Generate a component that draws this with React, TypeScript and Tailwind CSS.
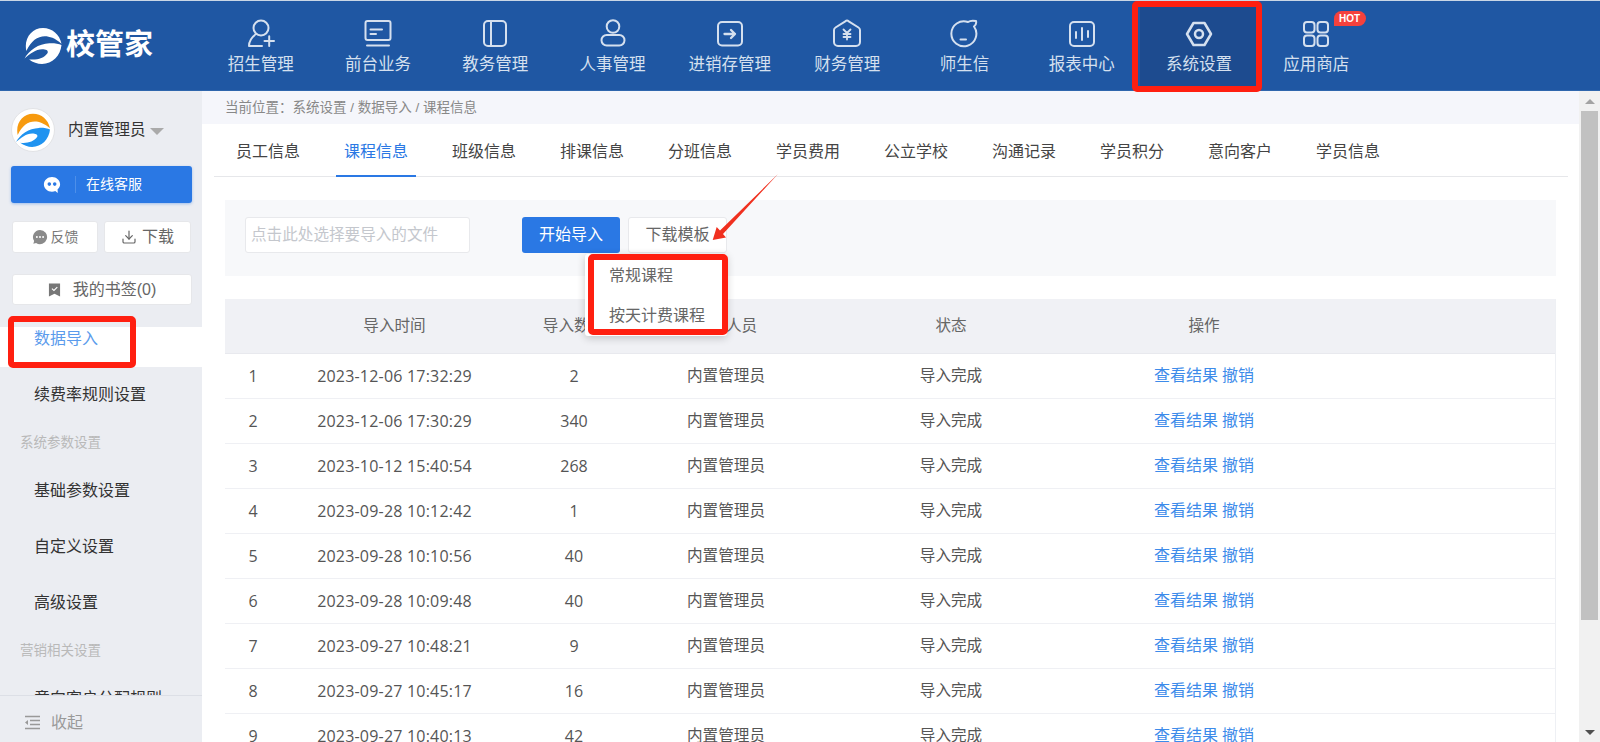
import type { ReactNode } from "react";
import { Download } from "lucide-react";

const FONT = "font-['Liberation_Sans','Noto_Sans_CJK_SC',sans-serif]";
const DIGITS = "font-['Open_Sans','Noto_Sans_CJK_SC',sans-serif] text-[16px]";

const NavIcon = ({ children, thick }: { children: ReactNode; thick?: boolean }) => (
  <svg width="30" height="30" viewBox="0 0 30 30" fill="none" stroke="currentColor" strokeWidth={thick ? 2.5 : 2} strokeLinecap="round" strokeLinejoin="round">
    {children}
  </svg>
);

const navItems: { label: string; icon: ReactNode; active?: boolean; hot?: boolean }[] = [
  {
    label: "招生管理",
    icon: (
      <NavIcon>
        <circle cx="15" cy="9" r="7.5" />
        <path d="M10 15 C6 18 3 22 3 27 H16" />
        <path d="M18.5 22 H28 M23.2 17.2 V27" />
      </NavIcon>
    ),
  },
  {
    label: "前台业务",
    icon: (
      <NavIcon>
        <rect x="2.5" y="2" width="25" height="19" rx="2" />
        <path d="M7.5 10.5 H19 M7.5 15 H13" />
        <path d="M4 26.5 H26" />
      </NavIcon>
    ),
  },
  {
    label: "教务管理",
    icon: (
      <NavIcon>
        <rect x="4" y="2" width="22" height="25" rx="4" />
        <path d="M11 2 V27" />
      </NavIcon>
    ),
  },
  {
    label: "人事管理",
    icon: (
      <NavIcon>
        <circle cx="15" cy="7.5" r="6.3" />
        <rect x="3.5" y="16" width="23" height="10.5" rx="5.2" />
      </NavIcon>
    ),
  },
  {
    label: "进销存管理",
    icon: (
      <NavIcon>
        <rect x="3" y="3" width="24" height="23.5" rx="4" />
        <path d="M9.5 15 H20 M16 11 L20 15 L16 19" strokeWidth="2.3" />
      </NavIcon>
    ),
  },
  {
    label: "财务管理",
    icon: (
      <NavIcon>
        <path d="M13.3 2.3 A2.5 2.5 0 0 1 16.7 2.3 L26.5 8.5 A3 3 0 0 1 28 11 V23 A4 4 0 0 1 24 27 H6 A4 4 0 0 1 2 23 V11 A3 3 0 0 1 3.5 8.5 Z" />
        <path d="M11.5 10.5 L15 14 L18.5 10.5 M11.5 15 H18.5 M11.5 18 H18.5 M15 14 V20.5" strokeWidth="1.8" />
      </NavIcon>
    ),
  },
  {
    label: "师生信",
    icon: (
      <NavIcon>
        <path d="M19 3 A12.5 12.5 0 1 0 25 7.5 C27 6 27.5 4 27 2 C24.5 1.5 21 1.5 19 3 Z" />
        <path d="M11.5 20.5 H17" />
      </NavIcon>
    ),
  },
  {
    label: "报表中心",
    icon: (
      <NavIcon>
        <rect x="3" y="3" width="24" height="24" rx="4" />
        <path d="M9 13 V19 M15 9 V21 M21 12 V18" />
      </NavIcon>
    ),
  },
  {
    label: "系统设置",
    active: true,
    icon: (
      <NavIcon thick>
        <path d="M9.5 4 H20.5 L27 15 L20.5 26 H9.5 L3 15 Z" />
        <circle cx="15" cy="15" r="4" />
      </NavIcon>
    ),
  },
  {
    label: "应用商店",
    hot: true,
    icon: (
      <NavIcon>
        <rect x="3" y="3" width="10.5" height="10.5" rx="3" />
        <rect x="16.5" y="3" width="10.5" height="10.5" rx="3" />
        <rect x="3" y="16.5" width="10.5" height="10.5" rx="3" />
        <rect x="16.5" y="16.5" width="10.5" height="10.5" rx="3" />
      </NavIcon>
    ),
  },
];

const tabs = ["员工信息", "课程信息", "班级信息", "排课信息", "分班信息", "学员费用", "公立学校", "沟通记录", "学员积分", "意向客户", "学员信息"];

const rows = [
  ["1", "2023-12-06 17:32:29", "2"],
  ["2", "2023-12-06 17:30:29", "340"],
  ["3", "2023-10-12 15:40:54", "268"],
  ["4", "2023-09-28 10:12:42", "1"],
  ["5", "2023-09-28 10:10:56", "40"],
  ["6", "2023-09-28 10:09:48", "40"],
  ["7", "2023-09-27 10:48:21", "9"],
  ["8", "2023-09-27 10:45:17", "16"],
  ["9", "2023-09-27 10:40:13", "42"],
];

const COLS = "grid grid-cols-[56px_227px_132px_172px_278px_228px_1fr] items-center text-center";

const Logo = ({ top, bottom }: { top: string; bottom: string }) => (
  <svg viewBox="0 0 40 40" className="w-full h-full">
    <path d="M2 26 C-1 12 8 1 20 1 C30 1 38 8 40 18 C33 12 27 10 22 10 C14 10 7 15 2 26 Z" fill={top} />
    <path d="M0 34 C5 25 15 18 27 17.5 C32 17.3 37 18 40 19.5 C39 31 30 40 19 40 C14 40 9 38 5 35 C13 36 21 34 25 28 C26 25 23 24 19 24 C12 24 6 29 0 34 Z" fill={bottom} />
  </svg>
);

const App = () => {
  return (
    <div className={`relative h-[742px] w-full overflow-hidden bg-white flex flex-col ${FONT}`}>
      {/* top bar */}
      <header className="h-[91px] shrink-0 bg-[#1f57a3] border-t border-t-[#c9d6e6] border-b border-b-[#2f66ad] flex">
        <div className="w-[202px] shrink-0 pl-6 flex items-center gap-[4px]">
          <div className="w-[38px] h-[37px]">
            <Logo top="#ffffff" bottom="#ffffff" />
          </div>
          <span className="text-[29px] font-bold text-white leading-none">校管家</span>
        </div>
        <nav className="flex">
          {navItems.map((item) => (
            <div
              key={item.label}
              className={`relative w-[117.3px] pt-[18px] flex flex-col items-center text-[#d5e0ef] ${item.active ? "bg-[#1d4b8f]" : ""}`}
            >
              <div className="h-[30px]">{item.icon}</div>
              <span className="mt-[3px] text-[16.5px] leading-6 whitespace-nowrap">{item.label}</span>
              {item.hot && (
                <span className="absolute left-[76px] top-[10px] h-[15px] w-[32px] rounded-full rounded-bl-none bg-[#f5413c] text-white text-[10px] font-bold leading-[15px] text-center">
                  HOT
                </span>
              )}
            </div>
          ))}
        </nav>
      </header>

      <div className="flex flex-1 min-h-0">
        {/* sidebar */}
        <aside className="w-[202px] shrink-0 bg-[#ebedf2] flex flex-col">
          <div className="pl-[11px] pr-[10px] pt-[17px]">
            <div className="flex items-center h-11">
              <div className="w-11 h-11 rounded-full bg-white border border-[#e2e3e6] p-1">
                <Logo top="#f79a0e" bottom="#1f93f0" />
              </div>
              <span className="ml-[13px] text-[15.5px] text-[#333]">内置管理员</span>
              <span className="ml-[4px] mt-[2px] w-0 h-0 border-x-[7px] border-x-transparent border-t-[7px] border-t-[#aaa]" />
            </div>
            <div className="mt-[14px] h-[37px] rounded-[3px] bg-[#2a78e4] shadow-[0_1px_3px_rgba(42,120,228,0.4)] flex items-center text-white text-[14px]">
              <svg viewBox="0 0 20 20" className="w-[18px] h-[18px] ml-[32px] mt-px" fill="#fff">
                <path d="M10 1 C5 1 1 4.6 1 9.5 C1 14 5 17.5 10 17.5 C11.5 17.5 12.6 17.2 13.6 16.8 L16.4 19 L16.2 14.8 C18 13.2 19 11.4 19 9.5 C19 4.6 15 1 10 1 Z" />
                <circle cx="7" cy="9" r="2" fill="#2a78e4" />
                <circle cx="13" cy="9" r="2" fill="#2a78e4" />
              </svg>
              <span className="ml-[14px] h-[17px] w-px bg-[#4d8fe9]" />
              <span className="ml-[10px]">在线客服</span>
            </div>
            <div className="mt-[18px] flex gap-[6px] pl-px">
              <div className="w-[86px] h-8 bg-white rounded-[3px] border border-[#e6e7ea] flex items-center justify-center gap-[3px] text-[14px] text-[#777]">
                <svg viewBox="0 0 18 18" className="w-4 h-4" fill="#8a8a8a">
                  <path d="M9 1 A8 8 0 1 1 4.6 15.7 L1.5 16.5 L2.4 13.4 A8 8 0 0 1 9 1 Z" />
                  <circle cx="5.5" cy="9" r="1.1" fill="#fff" />
                  <circle cx="9" cy="9" r="1.1" fill="#fff" />
                  <circle cx="12.5" cy="9" r="1.1" fill="#fff" />
                </svg>
                反馈
              </div>
              <div className="w-[87px] h-8 bg-white rounded-[3px] border border-[#e6e7ea] flex items-center justify-center gap-[5px] text-[16px] text-[#666]">
                <Download size={16} strokeWidth={1.8} />
                下载
              </div>
            </div>
            <div className="mt-[21px] ml-px w-[180px] h-[31px] bg-white rounded-[3px] border border-[#e6e7ea] flex items-center justify-center gap-[12px] text-[16px] text-[#666]">
              <svg viewBox="0 0 14 16" className="w-[13px] h-4">
                <path d="M1 1 H13 V15 L7 12 L1 15 Z" fill="#777" />
                <path d="M4.2 6.5 L6.4 8.5 L10 4.8" stroke="#fff" strokeWidth="1.2" fill="none" />
              </svg>
              我的书签(0)
            </div>
          </div>

          <div className="mt-[22px] flex-1 min-h-0 overflow-hidden">
            <div className="-mt-[16px] text-[16px] text-[#333]">
              <div className="h-14 bg-white flex items-center pl-[34px] text-[#5b9bec]">数据导入</div>
              <div className="h-14 flex items-center pl-[34px]">续费率规则设置</div>
              <div className="h-10 flex items-center pl-5 text-[13.5px] text-[#b9b9b9]">系统参数设置</div>
              <div className="h-14 flex items-center pl-[34px]">基础参数设置</div>
              <div className="h-14 flex items-center pl-[34px]">自定义设置</div>
              <div className="h-14 flex items-center pl-[34px]">高级设置</div>
              <div className="h-10 flex items-center pl-5 text-[13.5px] text-[#b9b9b9]">营销相关设置</div>
              <div className="h-14 flex items-center pl-[34px]">意向客户分配规则</div>
            </div>
          </div>
          <div className="h-[47px] shrink-0 border-t border-[#dcdfe6] flex items-center pl-[24px] pt-[7px] gap-[10px] text-[16px] text-[#999]">
            <svg width="17" height="15" viewBox="0 0 17 15" fill="none" stroke="#999" strokeWidth="1.3">
              <path d="M1 1.5 H16 M6 5.5 H16 M6 9.5 H16 M1 13.5 H16" />
              <path d="M4 5 L1 7.5 L4 10 Z" fill="#999" stroke="none" />
            </svg>
            收起
          </div>
        </aside>

        {/* content */}
        <main className="flex-1 min-w-0 flex flex-col">
          <div className="h-[33px] shrink-0 bg-[#f5f6fb] pl-[23px] pt-px flex items-center text-[13.5px] text-[#888]">
            当前位置：系统设置 / 数据导入 / 课程信息
          </div>
          <div className="ml-3 mr-[11px] h-[53px] shrink-0 border-b border-[#e6e7ea] flex">
            {tabs.map((tab, i) => (
              <div key={tab} className="w-[108px] flex justify-center pt-[16px] text-[16px]">
                <span className={i === 1 ? "h-[37px] px-[8px] border-b-2 border-[#2a78e4] text-[#2a78e4]" : "text-[#444]"}>{tab}</span>
              </div>
            ))}
          </div>

          <div className="px-[23px]">
            <div className="mt-[23px] h-[76px] bg-[#f7f8fa] pl-5 pt-[17px] flex items-start">
              <div className="w-[225px] h-9 bg-white border border-[#e8e9ec] rounded-[3px] pl-[5px] flex items-center text-[15.6px] text-[#c4c7cd]">
                点击此处选择要导入的文件
              </div>
              <button className="ml-[52px] w-[98px] h-9 rounded-[3px] bg-[#2a78e4] text-white text-[16px]">开始导入</button>
              <button className="ml-2 w-[99px] h-9 rounded-[3px] bg-white border border-[#e8e9ec] text-[#666] text-[16px]">下载模板</button>
            </div>

            <div className="mt-[23px] border-r border-[#eef0f4]">
              <div className={`${COLS} h-[55px] bg-[#f0f1f5] border-b border-[#e8e9ee] text-[15.6px] text-[#666]`}>
                <span />
                <span>导入时间</span>
                <span>导入数量</span>
                <span>导入人员</span>
                <span>状态</span>
                <span>操作</span>
                <span />
              </div>
              {rows.map((row) => (
                <div key={row[0]} className={`${COLS} h-[45px] border-b border-[#eff0f4] text-[15.6px] text-[#555]`}>
                  <span className={DIGITS}>{row[0]}</span>
                  <span className={`${DIGITS} tracking-[0.2px] whitespace-nowrap`}>{row[1]}</span>
                  <span className={DIGITS}>{row[2]}</span>
                  <span>内置管理员</span>
                  <span>导入完成</span>
                  <span className="text-[16px] text-[#3d8bea] flex justify-center gap-[4px]">
                    <span>查看结果</span>
                    <span>撤销</span>
                  </span>
                  <span />
                </div>
              ))}
            </div>
          </div>
        </main>

        {/* scrollbar */}
        <div className="w-[21px] shrink-0 bg-[#f1f1f1] flex flex-col items-center">
          <div className="mt-[8px] w-0 h-0 border-x-[5px] border-x-transparent border-b-[5px] border-b-[#a3a3a3]" />
          <div className="mt-[7px] w-[17px] h-[509px] bg-[#c1c1c1]" />
          <div className="mt-auto mb-[7px] w-0 h-0 border-x-[5px] border-x-transparent border-t-[5px] border-t-[#505050]" />
        </div>
      </div>

      {/* dropdown, over the table */}
      <div className="absolute left-[585px] top-[254px] w-[142px] h-[82px] bg-white rounded-[3px] shadow-[0_2px_8px_rgba(0,0,0,0.2)] text-[16px] text-[#666] pl-6 flex flex-col">
        <span className="h-10 pt-[10px]">常规课程</span>
        <span className="h-10 pt-[10px]">按天计费课程</span>
      </div>

      {/* annotation marks drawn on the screenshot */}
      <div className="absolute left-[1132px] top-px w-[130px] h-[91px] border-[6px] border-[#ff1f10] rounded-[5px]" />
      <div className="absolute left-[8px] top-[316px] w-[128px] h-[52px] border-[6px] border-[#ff1f10] rounded-[5px]" />
      <div className="absolute left-[588px] top-[254px] w-[140px] h-[81px] border-[6px] border-[#ff1f10] rounded-[5px]" />
      <svg className="absolute left-[700px] top-[165px]" width="90" height="85" viewBox="0 0 90 85">
        <path d="M12.7 75 L16.7 62 L20 65.5 L78 9 L23 69 L26 72.5 Z" fill="#f0301f" />
      </svg>
    </div>
  );
};

export default App;
